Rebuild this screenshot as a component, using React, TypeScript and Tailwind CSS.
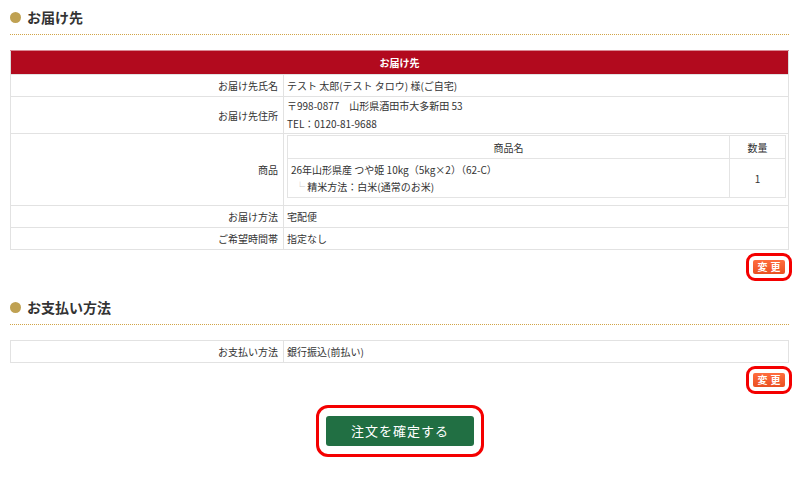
import React from "react";

const font = { fontFamily: '"Noto Sans CJK JP", "Noto Sans", sans-serif' };

function Heading({ title }: { title: string }) {
  return (
    <div>
      <div className="flex h-[20px] items-center gap-[6px]">
        <span className="h-[11px] w-[11px] rounded-full bg-[#bfa152]" />
        <span className="text-[14px] font-bold text-[#333]">{title}</span>
      </div>
      <div className="mt-[7px] h-[1px] bg-[repeating-linear-gradient(90deg,#d1a447_0px,#d1a447_1px,transparent_1px,transparent_2px)]" />
    </div>
  );
}

function ChangeButton() {
  return (
    <div className="flex justify-end">
      <div className="rounded-[9px] border-[3px] border-[#f40000] p-[4px]">
        <button className="flex h-[14px] w-[32px] items-center justify-center rounded-[2px] bg-gradient-to-b from-[#ff6c3e] to-[#ea4f20] pl-[3px] text-[10px] font-bold leading-none tracking-[3px] text-white">
          変更
        </button>
      </div>
    </div>
  );
}

function Row({ label, children, h }: { label: string; children: React.ReactNode; h: string }) {
  return (
    <tr className={h}>
      <td className="w-[273px] border border-[#e2e2e2] pr-[5px] text-right align-middle">{label}</td>
      <td className="border border-[#e2e2e2] pl-[3px] align-middle">{children}</td>
    </tr>
  );
}

export default function App() {
  return (
    <div className="h-[488px] w-[800px] overflow-hidden bg-white px-[10px] pt-[7px] text-[10px] text-[#333]" style={font}>
      <Heading title="お届け先" />

      <table className="mt-[15px] w-[779px] border-collapse border border-[#dcdcdc]">
        <tbody>
          <tr className="h-[24px]">
            <th colSpan={2} className="border-t border-[#d98a94] bg-[#b20a1e] text-center text-[10px] font-bold text-white">
              お届け先
            </th>
          </tr>
          <Row label="お届け先氏名" h="h-[22px]">
            テスト 太郎(テスト タロウ) 様(ご自宅)
          </Row>
          <Row label="お届け先住所" h="h-[37px]">
            <div className="leading-[18px]">〒998-0877　山形県酒田市大多新田 53</div>
            <div className="leading-[18px]">TEL：0120-81-9688</div>
          </Row>
          <Row label="商品" h="h-[72px]">
            <div className="pb-[7px] pr-[2px] pt-[1px]">
              <table className="w-full border-collapse border border-[#dedede]">
                <tbody>
                  <tr className="h-[23px]">
                    <td className="border border-[#e4e4e4] text-center">商品名</td>
                    <td className="w-[56px] border border-[#e4e4e4] text-center">数量</td>
                  </tr>
                  <tr className="h-[39px]">
                    <td className="border border-[#e4e4e4] pl-[3px] align-middle">
                      <div className="leading-[17px]">26年山形県産 つや姫 10kg（5kg×2）（62-C）</div>
                      <div className="pl-[4px] leading-[17px]">
                        <span className="text-[#c8c8c8]">└ </span>精米方法：白米(通常のお米)
                      </div>
                    </td>
                    <td className="border border-[#e4e4e4] text-center">1</td>
                  </tr>
                </tbody>
              </table>
            </div>
          </Row>
          <Row label="お届け方法" h="h-[22px]">
            宅配便
          </Row>
          <Row label="ご希望時間帯" h="h-[22px]">
            指定なし
          </Row>
        </tbody>
      </table>

      <div className="mr-[-2px] mt-[3px]">
        <ChangeButton />
      </div>

      <div className="mt-[16px]">
        <Heading title="お支払い方法" />
      </div>

      <table className="mt-[15px] w-[779px] border-collapse border border-[#dcdcdc]">
        <tbody>
          <Row label="お支払い方法" h="h-[22px]">
            銀行振込(前払い)
          </Row>
        </tbody>
      </table>

      <div className="mr-[-2px] mt-[3px]">
        <ChangeButton />
      </div>

      <div className="mt-[11px] flex justify-center">
        <div className="rounded-[12px] border-[3px] border-[#f40000] px-[7px] py-[8px]">
          <button className="flex h-[30px] w-[148px] items-center justify-center rounded-[3px] bg-[#216f43] text-[13px] tracking-[1px] text-white">
            注文を確定する
          </button>
        </div>
      </div>
    </div>
  );
}
